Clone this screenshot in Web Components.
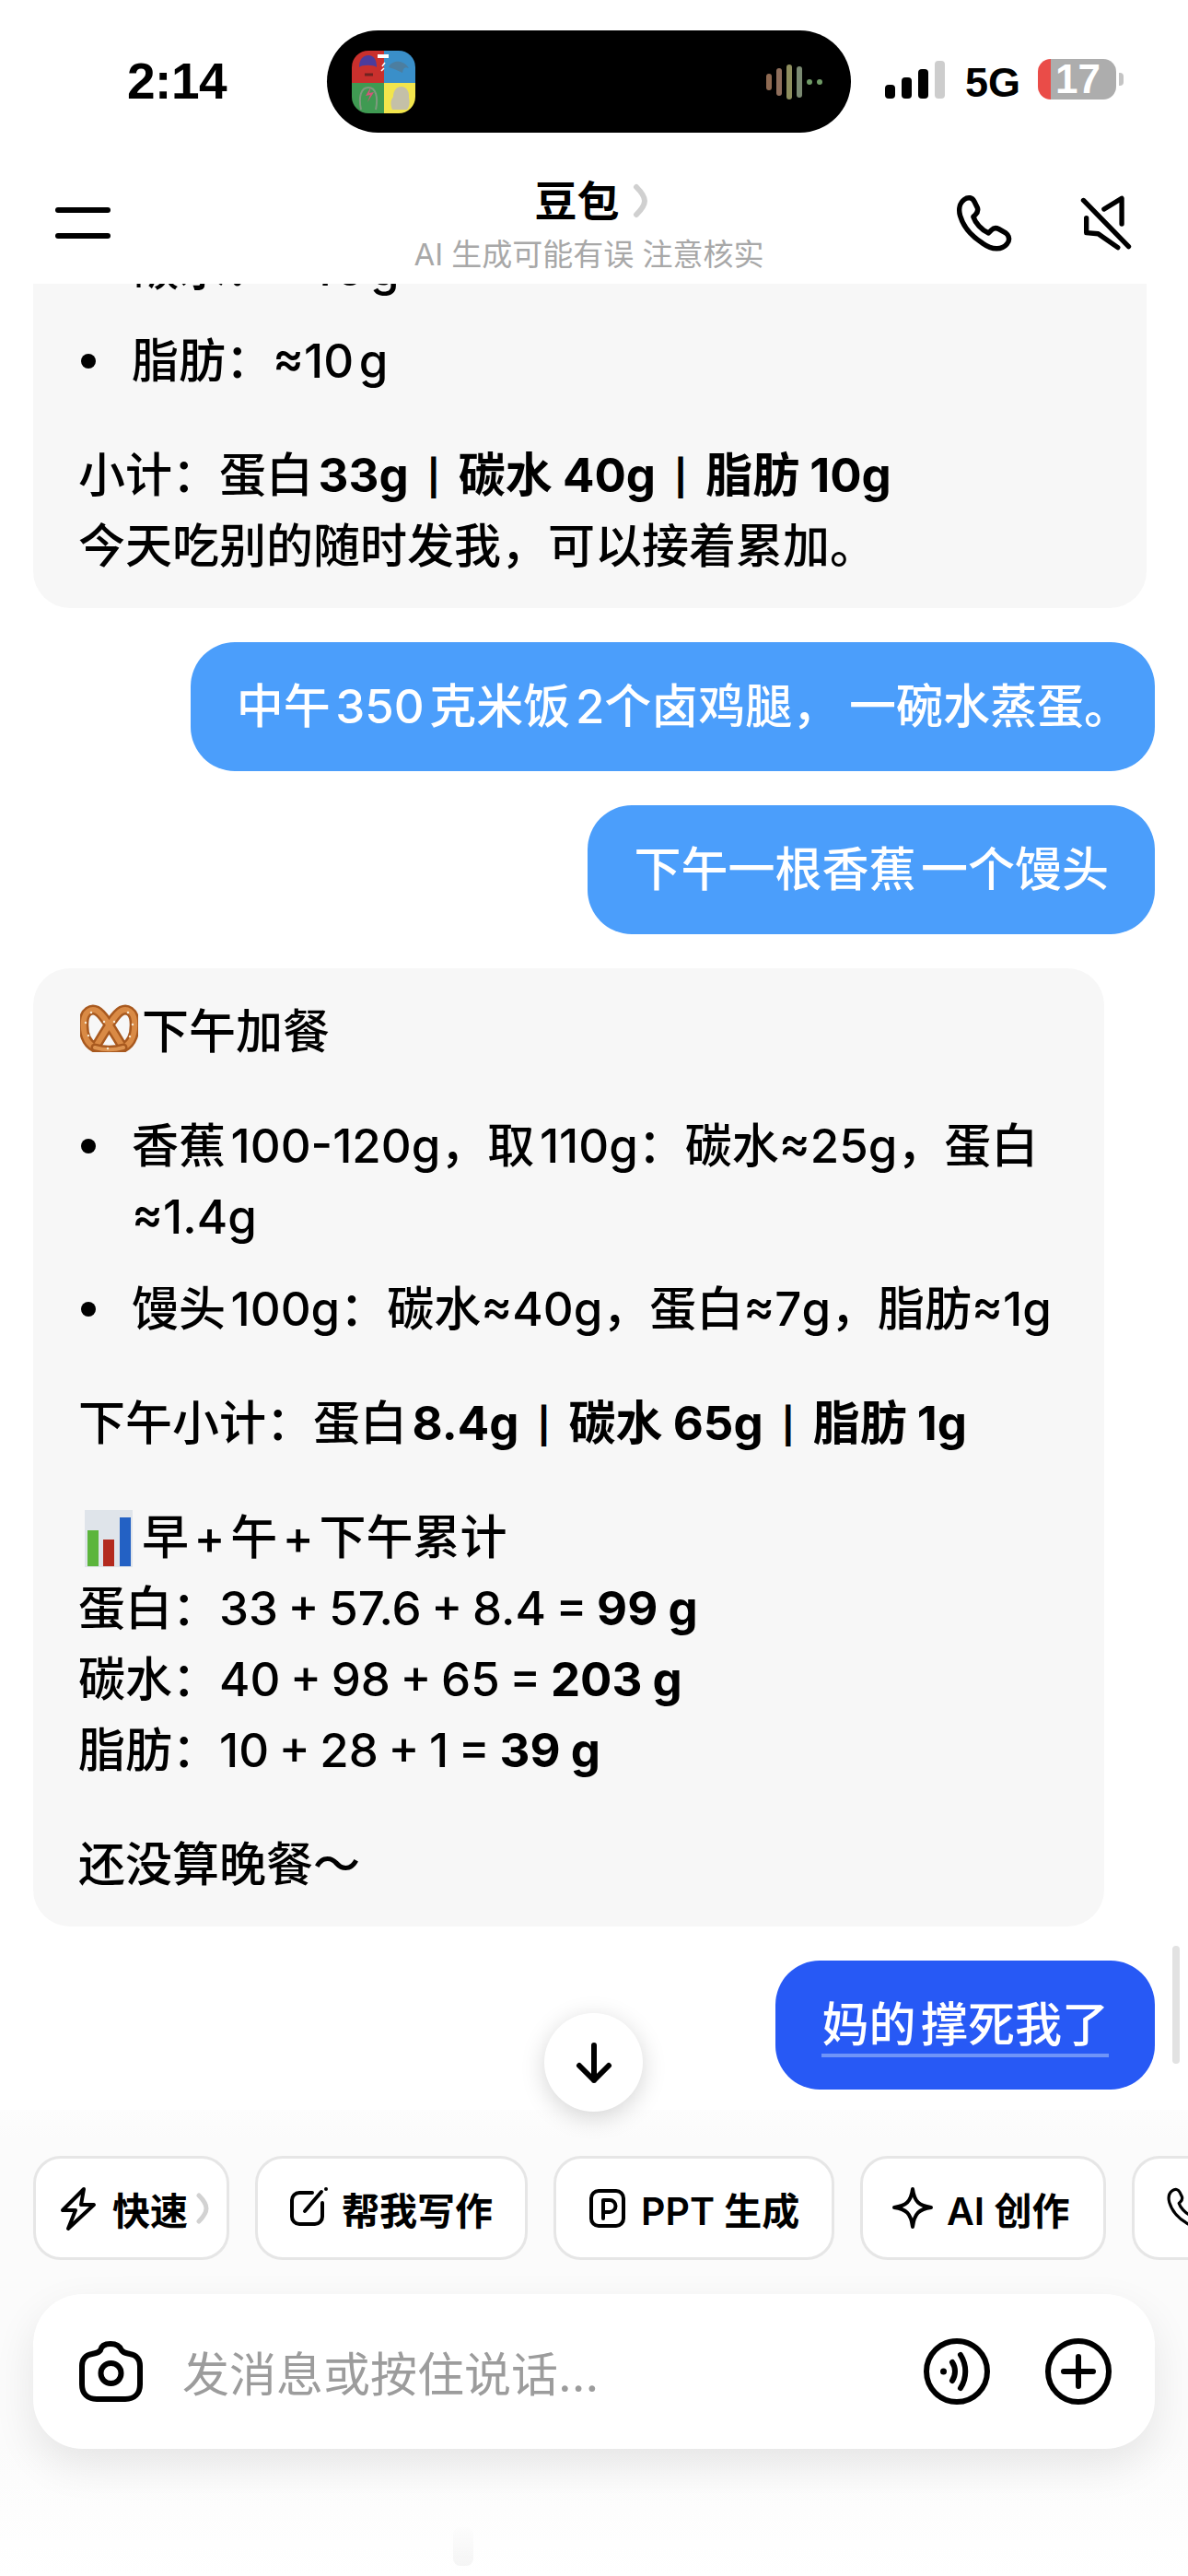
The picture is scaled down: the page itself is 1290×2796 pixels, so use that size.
<!DOCTYPE html>
<html lang="zh">
<head>
<meta charset="utf-8">
<title>豆包</title>
<style>
    html, body { margin: 0; padding: 0; background: #fff; }
    body { width: 1290px; height: 2796px; overflow: hidden; font-family: Inter, "Noto Sans CJK SC", sans-serif; color: #000; }
    b { font-weight: 700; word-spacing: -1px; }
</style>
</head>
<body>
<phone-page>
    <status-bar></status-bar>
    <app-header></app-header>
    <chat-view>
        <msg-bubble class="first">
            <food-item>碳水：≈40 g</food-item>
            <food-item>脂肪：≈10 g</food-item>
            <p>小计：蛋白 <b>33g<bar-sep></bar-sep>碳水 40g<bar-sep></bar-sep>脂肪 10g</b><br>今天吃别的随时发我，可以接着累加。</p>
        </msg-bubble>
        <msg-bubble type="user" style="padding-right:26px">中午 350 克米饭 2个卤鸡腿，<loose-text> </loose-text>一碗水蒸蛋。</msg-bubble>
        <msg-bubble type="user">下午一根香蕉 一个馒头</msg-bubble>
        <msg-bubble style="width:1163px">
            <p><emoji-pic name="pretzel"></emoji-pic>下午加餐</p>
            <food-item class="lead">香蕉 100-120g，取 110g：碳水≈25g，蛋白<br>≈1.4g</food-item>
            <food-item>馒头 100g：碳水≈40g，蛋白≈7g，脂肪≈1g</food-item>
            <p>下午小计：蛋白 <b>8.4g<bar-sep></bar-sep>碳水 65g<bar-sep></bar-sep>脂肪 1g</b></p>
            <p><emoji-pic name="chart"></emoji-pic>早 + 午 + 下午累计<br>蛋白：<loose-text>33 + 57.6 + 8.4 = </loose-text><b>99 g</b><br>碳水：<loose-text>40 + 98 + 65 = </loose-text><b>203 g</b><br>脂肪：<loose-text>10 + 28 + 1 = </loose-text><b>39 g</b></p>
            <p>还没算晚餐～</p>
        </msg-bubble>
        <msg-bubble type="user" tone="strong"><u>妈的 撑死我了</u></msg-bubble>
    </chat-view>
    <bottom-panel></bottom-panel>
</phone-page>

<script>
// icons used by more than one element
const PHONE = '<path d="M10 6C14 3 18 4 20 8l3 6c1 3 0 5-2 7l-2 2c2 6 8 13 15 16l3-3c2-2 5-2 7-1l7 4c4 3 4 8 1 11-5 6-14 6-24-1C17 42 9 32 6 22 4 15 6 9 10 6Z"/>';

// chip icons, drawn in a 42x48 box
const CHIP_ICONS = {
    bolt: '<path d="M27 3 4 26h14l-8 20 28-26H24Z"/>',
    note: '<path d="M26 7H12a8 8 0 0 0-8 8v18a8 8 0 0 0 8 8h17a8 8 0 0 0 8-8V18"/><path d="M18 27 36 6"/><path d="M41 3v.1"/>',
    ppt: '<rect x="4" y="5" width="35" height="38" rx="8"/><path d="M17 35V15h7a6.500 6.500 0 0 1 0 13h-7"/>',
    spark: '<path d="M21 3c2 14 7 18 20 20-13 2-18 6-20 21-2-15-7-19-20-21 13-2 18-6 20-20Z"/>',
    phone: '<g transform="scale(.8)">' + PHONE + '</g>'
};

class PhonePage extends HTMLElement {
    constructor() {
        super();
        this.attachShadow({ mode: 'open' });
        this.shadowRoot.innerHTML = `
            <style>
                :host { display: flex; flex-direction: column; width: 1290px; height: 2796px; position: relative; overflow: hidden; }
                .bar { position: absolute; left: 1273px; top: 2112px; width: 8px; height: 128px; border-radius: 4px; background: #e2e2e2; }
                .down { position: absolute; left: 591px; top: 2185px; width: 107px; height: 107px; border-radius: 50%; background: #fff;
                    box-shadow: 0 6px 26px rgba(0,0,0,.17); display: flex; align-items: center; justify-content: center; }
                svg { width: 44px; height: 44px; fill: none; stroke: #000; stroke-width: 6; stroke-linecap: round; stroke-linejoin: round; }
            </style>
            <slot></slot>
            <div class="bar"></div>
            <div class="down"><svg viewBox="0 0 44 44"><path d="M22 3v38M6 25l16 16 16-16"/></svg></div>
        `;
    }
}

class StatusBar extends HTMLElement {
    constructor() {
        super();
        this.attachShadow({ mode: 'open' });
        this.shadowRoot.innerHTML = `
            <style>
                :host { display: flex; align-items: flex-start; height: 150px; flex: none; box-sizing: border-box; padding: 33px 0 0 138px; font-family: "Liberation Sans", "Noto Sans", sans-serif; }
                .time { width: 217px; font-size: 55px; font-weight: 700; line-height: 110px; letter-spacing: -.5px; }
                .island { width: 569px; height: 111px; border-radius: 56px; background: #000; display: flex; align-items: center; justify-content: space-between; box-sizing: border-box; padding: 0 31px 0 27px; }
                .album { width: 69px; height: 68px; border-radius: 18px; overflow: hidden; display: block; }
                .wave { display: flex; align-items: center; gap: 5px; }
                .wave i { display: block; width: 6px; border-radius: 3px; }
                .right { display: flex; align-items: flex-start; margin-left: 37px; }
                .signal { display: flex; align-items: flex-end; gap: 7px; height: 41px; margin-top: 33px; }
                .signal i { display: block; width: 11px; border-radius: 4px; background: #000; }
                .net { font-size: 45px; font-weight: 700; line-height: 45px; margin: 34px 19px 0 22px; }
                .batt { width: 85px; height: 44px; border-radius: 14px; margin-top: 31px; background: linear-gradient(90deg, #ea4c48 14px, #adadad 14px); color: #fff; font-size: 44px; font-weight: 700; line-height: 44px; text-align: center; box-sizing: border-box; padding-left: 2px; }
                .nub { width: 5px; height: 14px; margin: 46px 0 0 3px; border-radius: 0 4px 4px 0; background: #c4c4c4; }
            </style>
            <div class="time">2:14</div>
            <div class="island">
                <svg class="album" viewBox="0 0 69 68">
                    <rect width="35" height="35" fill="#c9302d"/><rect x="35" width="34" height="35" fill="#3a8fc9"/>
                    <rect y="35" width="35" height="33" fill="#3f9a52"/><rect x="35" y="35" width="34" height="33" fill="#f2e54c"/>
                    <path d="M8 18c0-8 4-13 10-13s9 5 9 13c-3-3-16-3-19 0Z" fill="#4b3c9c"/>
                    <path d="M14 26h9" stroke="#6f2320" stroke-width="3"/>
                    <path d="M40 18c3-8 16-9 22 1-5-2-6 0-7 5-6-3-11-5-15-6Z" fill="#4c7ea0"/>
                    <path d="M28 6h12" stroke="#fff" stroke-width="4"/><path d="M36 13l-3 4M35 19l-3 3" stroke="#fff" stroke-width="1.5"/>
                    <path d="M10 64c-3-14 0-24 8-24s11 10 8 24" fill="none" stroke="#7e9a7e" stroke-width="2"/>
                    <path d="M21 39l-6 10 5-1-3 8 7-11-5 1Z" fill="#d2567a"/>
                    <path d="M44 64c-3-8-1-11 1-14 0-8 5-11 9-11s9 4 8 12c1 5 1 9-2 13Z" fill="#c4c0a8"/>
                </svg>
                <div class="wave">
                    <i style="height:18px;background:#8f6a52"></i>
                    <i style="height:30px;background:#8f6f5c"></i>
                    <i style="height:38px;background:#8e8e5e"></i>
                    <i style="height:34px;background:#7b8a72"></i>
                    <i style="height:6px;background:#6f9a66"></i>
                    <i style="height:6px;background:#6f9a66"></i>
                </div>
            </div>
            <div class="right">
                <div class="signal">
                    <i style="height:15px"></i><i style="height:23px"></i><i style="height:32px"></i><i style="height:41px;background:#cdcdcd"></i>
                </div>
                <div class="net">5G</div>
                <div class="batt">17</div>
                <div class="nub"></div>
            </div>
        `;
    }
}

class AppHeader extends HTMLElement {
    constructor() {
        super();
        this.attachShadow({ mode: 'open' });
        this.shadowRoot.innerHTML = `
            <style>
                :host { display: grid; grid-template-columns: 340px 1fr 352px; height: 158px; flex: none; box-sizing: border-box; padding: 0 59px 0 60px; background: #fff; }
                .menu { display: flex; flex-direction: column; gap: 22px; margin-top: 75px; }
                .menu i { display: block; width: 60px; height: 6px; border-radius: 3px; background: #000; }
                .center { text-align: center; margin-top: 42px; }
                .title { display: flex; justify-content: center; align-items: center; gap: 14px; font-size: 46px; font-weight: 700; line-height: 52px; padding-left: 6px; }
                .title svg { width: 18px; height: 38px; fill: none; stroke: #d0d0d0; stroke-width: 6; stroke-linecap: round; stroke-linejoin: round; }
                .sub { font-size: 33px; line-height: 40px; margin-top: 12px; color: #a8a8a8; white-space: nowrap; }
                .actions { display: flex; justify-content: flex-end; align-items: flex-start; gap: 69px; margin-top: 60px; }
                .actions svg { fill: none; stroke: #000; stroke-width: 5; stroke-linecap: round; stroke-linejoin: round; }
                .call { width: 66px; height: 66px; }
                .mute { width: 60px; height: 64px; }
            </style>
            <div class="menu"><i></i><i></i></div>
            <div class="center">
                <div class="title">豆包<svg viewBox="0 0 18 38"><path d="M4 4c5 5 9 10 9 15s-4 10-9 15"/></svg></div>
                <div class="sub">AI 生成可能有误 注意核实</div>
            </div>
            <div class="actions">
                <svg class="call" viewBox="0 0 60 60">${PHONE}</svg>
                <svg class="mute" viewBox="0 0 56 60"><path d="M5 7l46 47"/><path d="M8 25v15l12 1 20 14"/><path d="M26 16 44 5v26"/></svg>
            </div>
        `;
    }
}

class ChatView extends HTMLElement {
    constructor() {
        super();
        this.attachShadow({ mode: 'open' });
        this.shadowRoot.innerHTML = `
            <style>
                :host { display: flex; flex-direction: column; align-items: flex-start; gap: 37px; flex: 1; min-height: 0; overflow: hidden; padding: 0 36px; font-size: 51px; font-weight: 500; line-height: 77px; word-spacing: -8px; }
            </style>
            <slot></slot>
        `;
    }
}

class MsgBubble extends HTMLElement {
    constructor() {
        super();
        this.attachShadow({ mode: 'open' });
        this.shadowRoot.innerHTML = `
            <style>
                :host { display: block; flex: none; box-sizing: border-box; max-width: 1209px; padding: 30px 46px 29px 49px; border-radius: 40px; background: #f7f7f7; }
                :host(.first) { width: 1209px; margin-top: -55px; padding-top: 0; border-radius: 0 0 40px 40px; }
                :host([type="user"]) { align-self: flex-end; padding: 31px 50px 32px; background: #4b9efb; color: #fff; border-radius: 48px; }
                :host([tone="strong"]) { background: #2759f5; }
                ::slotted(p) { margin: 0; }
                ::slotted(p:not(:first-child)) { margin-top: 47px; }
                ::slotted(food-item:not(:first-child)) { margin-top: 23px; }
                ::slotted(food-item.lead) { margin-top: 47px; }
                ::slotted(u) { text-decoration: none; display: inline-block; line-height: 62px; border-bottom: 4px solid #6f94f8; }
            </style>
            <slot></slot>
        `;
    }
}

class FoodItem extends HTMLElement {
    constructor() {
        super();
        this.attachShadow({ mode: 'open' });
        this.shadowRoot.innerHTML = `
            <style>
                :host { display: flex; }
                .dot { flex: none; width: 16px; height: 16px; border-radius: 50%; background: #000; margin: 31px 39px 0 3px; }
            </style>
            <span class="dot"></span><span><slot></slot></span>
        `;
    }
}

// text whose spaces stay wide, the bubble text tightens the rest
class LooseText extends HTMLElement {
    constructor() {
        super();
        this.attachShadow({ mode: 'open' });
        this.shadowRoot.innerHTML = `<style>:host { display: inline; word-spacing: -3px; white-space: pre-wrap; }</style><slot></slot>`;
    }
}

// the short | between the bold totals
class BarSep extends HTMLElement {
    constructor() {
        super();
        this.attachShadow({ mode: 'open' });
        this.shadowRoot.innerHTML = `
            <style>:host { display: inline-block; margin: 0 20px; font-size: 38px; line-height: 1; vertical-align: 2px; }</style>|
        `;
    }
}

class EmojiPic extends HTMLElement {
    constructor() {
        super();
        this.attachShadow({ mode: 'open' });
        const pretzel = `
            <svg viewBox="0 0 63 52" width="63" height="52">
                <g fill="none" stroke-linecap="round">
                    <path d="M16 47C6 42 3 30 4 18 5 8 12 4 18 7c8 4 20 26 28 39M47 47C57 42 60 30 59 18 58 8 51 4 45 7 37 11 25 33 17 46" stroke="#a8591f" stroke-width="11"/>
                    <path d="M16 47C6 42 3 30 4 18 5 8 12 4 18 7c8 4 20 26 28 39M47 47C57 42 60 30 59 18 58 8 51 4 45 7 37 11 25 33 17 46" stroke="#d98a45" stroke-width="6"/>
                    <path d="M16 47c10 3 21 3 31 0" stroke="#a8591f" stroke-width="9"/>
                    <path d="M16 47c10 3 21 3 31 0" stroke="#dd9350" stroke-width="4"/>
                    <path d="M6 20v.1M12 9v.1M52 9v.1M57 22v.1M26 19v.1M37 19v.1M9 34v.1M54 35v.1M30 48v.1" stroke="#f6e7d0" stroke-width="2.500"/>
                </g>
            </svg>`;
        const chart = `
            <svg viewBox="0 0 52 62" width="52" height="62">
                <rect width="52" height="62" fill="#dfe4ea"/>
                <rect x="3" y="22" width="12" height="39" fill="#5cb53c"/>
                <rect x="20" y="32" width="12" height="29" fill="#b32a1e"/>
                <rect x="38" y="8" width="12" height="53" fill="#2361c4"/>
            </svg>`;
        const isChart = this.getAttribute('name') === 'chart';
        this.shadowRoot.innerHTML = `
            <style>
                :host { display: inline-block; width: 69px; height: 62px; vertical-align: -14px; box-sizing: border-box; padding-left: ${isChart ? 7 : 2}px; }
                svg { display: block; }
            </style>
            ${isChart ? chart : pretzel}
        `;
    }
}

class ChipBtn extends HTMLElement {
    constructor() {
        super();
        this.attachShadow({ mode: 'open' });
        const icon = CHIP_ICONS[this.getAttribute('icon')];
        const arrow = this.hasAttribute('more');
        this.shadowRoot.innerHTML = `
            <style>
                :host { display: flex; align-items: center; flex: none; height: 113px; box-sizing: border-box; border: 3px solid #e6e6e6; border-radius: 30px; padding-left: ${this.getAttribute('pad') || 33}px; background: #fff; font-size: 41px; font-weight: 600; white-space: nowrap; }
                svg.icon { width: 42px; height: 48px; margin-right: 16px; flex: none; overflow: visible; fill: none; stroke: #000; stroke-width: 4; stroke-linecap: round; stroke-linejoin: round; }
                svg.more { width: 14px; height: 34px; margin-left: 9px; fill: none; stroke: #d2d2d2; stroke-width: 5; stroke-linecap: round; stroke-linejoin: round; }
            </style>
            <svg class="icon" viewBox="0 0 42 48">${icon}</svg><slot></slot>
            ${arrow ? '<svg class="more" viewBox="0 0 14 34"><path d="M3 3c5 5 8 10 8 14s-3 9-8 14"/></svg>' : ''}
        `;
    }
}

class InputBar extends HTMLElement {
    constructor() {
        super();
        this.attachShadow({ mode: 'open' });
        this.shadowRoot.innerHTML = `
            <style>
                :host { display: flex; align-items: center; height: 168px; box-sizing: border-box; padding: 0 46px 0 49px; border-radius: 54px; background: #fff; box-shadow: 0 18px 46px rgba(0,0,0,.09); }
                svg { fill: none; stroke: #000; stroke-linecap: round; stroke-linejoin: round; flex: none; }
                .cam { width: 71px; height: 66px; stroke-width: 6; }
                .hint { flex: 1; margin-left: 42px; font-size: 51px; color: #9c9c9c; white-space: nowrap; }
                .round { width: 74px; height: 74px; stroke-width: 6; }
                .round + .round { margin-left: 58px; }
            </style>
            <svg class="cam" viewBox="0 0 71 66">
                <path d="M24 10c1-5 5-7 11-7s10 2 12 7c2 3 5 3 9 4 7 1 11 6 11 13v20c0 10-6 16-16 16H20C10 63 4 57 4 47V27c0-7 4-12 11-13 4-1 7-1 9-4Z"/>
                <circle cx="35.500" cy="35" r="11"/>
            </svg>
            <div class="hint">发消息或按住说话...</div>
            <svg class="round" viewBox="0 0 74 74">
                <circle cx="37" cy="37" r="33"/>
                <path d="M22.500 37v.1" stroke-width="7"/>
                <path d="M32 27c4 6 4 14 0 20"/>
                <path d="M41 19c7 11 7 25 0 36"/>
            </svg>
            <svg class="round" viewBox="0 0 74 74">
                <circle cx="37" cy="37" r="33"/>
                <path d="M37 21v32M21 37h32"/>
            </svg>
        `;
    }
}

class BottomPanel extends HTMLElement {
    constructor() {
        super();
        this.attachShadow({ mode: 'open' });
        this.shadowRoot.innerHTML = `
            <style>
                :host { display: block; flex: none; height: 506px; box-sizing: border-box; padding: 50px 0 0 36px; background: linear-gradient(#fdfdfd, #fbfbfb 6%, #fbfbfb 72%, #fff); overflow: hidden; position: relative; }
                .chips { display: flex; gap: 28px; overflow: hidden; }
                input-bar { margin: 37px 36px 0 0; }
                /* ghost of the home bar, barely visible in the shot */
                .home { position: absolute; left: 492px; top: 453px; width: 22px; height: 42px; border-radius: 8px;
                    background: linear-gradient(rgba(0,0,0,.005), rgba(0,0,0,.04)); }
            </style>
            <div class="chips">
                <chip-btn icon="bolt" more pad="25" style="width:213px">快速</chip-btn>
                <chip-btn icon="note" style="width:296px">帮我写作</chip-btn>
                <chip-btn icon="ppt" pad="34" style="width:305px">PPT 生成</chip-btn>
                <chip-btn icon="spark" style="width:267px">AI 创作</chip-btn>
                <chip-btn icon="phone" style="width:140px"></chip-btn>
            </div>
            <input-bar></input-bar>
            <div class="home"></div>
        `;
    }
}

customElements.define('phone-page', PhonePage);
customElements.define('status-bar', StatusBar);
customElements.define('app-header', AppHeader);
customElements.define('chat-view', ChatView);
customElements.define('msg-bubble', MsgBubble);
customElements.define('food-item', FoodItem);
customElements.define('loose-text', LooseText);
customElements.define('bar-sep', BarSep);
customElements.define('emoji-pic', EmojiPic);
customElements.define('chip-btn', ChipBtn);
customElements.define('input-bar', InputBar);
customElements.define('bottom-panel', BottomPanel);
</script>
</body>
</html>
